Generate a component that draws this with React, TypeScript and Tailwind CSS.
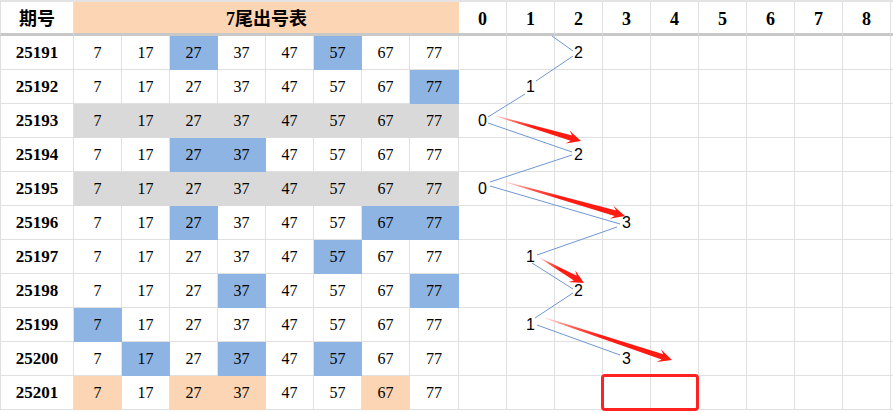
import React from "react";

type Row = { id: string; blue?: number[]; peach?: number[]; gray?: boolean; chart: number | null };

const rows: Row[] = [
  { id: "25191", blue: [27, 57], chart: 2 },
  { id: "25192", blue: [77], chart: 1 },
  { id: "25193", gray: true, chart: 0 },
  { id: "25194", blue: [27, 37], chart: 2 },
  { id: "25195", gray: true, chart: 0 },
  { id: "25196", blue: [27, 67, 77], chart: 3 },
  { id: "25197", blue: [57], chart: 1 },
  { id: "25198", blue: [37, 77], chart: 2 },
  { id: "25199", blue: [7], chart: 1 },
  { id: "25200", blue: [17, 37, 57], chart: 3 },
  { id: "25201", peach: [7, 27, 37, 67], chart: null },
];

const nums = [7, 17, 27, 37, 47, 57, 67, 77];
const digits = [0, 1, 2, 3, 4, 5, 6, 7, 8];

const grid = "grid grid-cols-[74px_repeat(7,48px)_49px_repeat(9,48px)_1fr]";
const serif = "font-['Liberation_Serif','Noto_Sans_CJK_SC',serif]";

function arrowPoly(tx: number, ty: number, px: number, py: number) {
  const dx = px - tx;
  const dy = py - ty;
  const L = Math.hypot(dx, dy);
  const ux = dx / L;
  const uy = dy / L;
  const nx = -uy;
  const ny = ux;
  const pt = (d: number, w: number) => `${(tx + ux * d + nx * w).toFixed(2)},${(ty + uy * d + ny * w).toFixed(2)}`;
  const hl = 14;
  return [pt(0, 0.4), pt(L - hl + 4, 2.8), pt(L - hl, 6.8), pt(L, 0), pt(L - hl, -6.8), pt(L - hl + 4, -2.8), pt(0, -0.4)].join(" ");
}

const arrows = [
  [496, 116, 581, 141],
  [505, 182, 625, 216],
  [540, 258, 584, 283],
  [545, 318, 672, 360],
];

const lines = [
  [552, 36, 573, 51],
  [573, 56, 536, 81],
  [525, 94, 488, 117],
  [488, 123, 572, 152],
  [572, 155, 490, 182],
  [490, 186, 620, 224],
  [617, 227, 537, 255],
  [532, 263, 573, 289],
  [573, 293, 535, 318],
  [537, 325, 620, 355],
];

export default function App() {
  return (
    <div className="relative w-[893px] h-[413px] overflow-hidden bg-white text-black">
      <div className="border-t-2 border-[#e3e3e3]">
        {/* header */}
        <div className={grid}>
          <div className={`h-[34px] border-l border-r border-b-[3px] border-l-[#e0e0e0] border-r-[#e0e0e0] border-b-[#c8c8c8] flex items-center justify-center pt-[3px] text-[18px] font-bold ${serif}`}>
            期号
          </div>
          <div className={`col-span-8 h-[34px] bg-[#fcd5b4] border-b-[3px] border-b-[#c8c8c8] flex items-center justify-center pt-[3px] text-[18px] font-bold ${serif}`}>
            7尾出号表
          </div>
          {digits.map((d) => (
            <div
              key={d}
              className={`h-[34px] border-r border-r-[#e0e0e0] border-b-[3px] border-b-[#c8c8c8] flex items-center justify-center pt-[4px] text-[18px] font-bold ${serif}`}
            >
              {d}
            </div>
          ))}
          <div className="h-[34px] border-b-[3px] border-b-[#c8c8c8]" />
        </div>
        {/* rows */}
        {rows.map((r) => (
          <div key={r.id} className={grid}>
            <div className={`h-[34px] border-l border-r border-b border-[#e0e0e0] flex items-center justify-center text-[17px] font-bold ${serif}`}>
              {r.id}
            </div>
            {nums.map((n) => {
              let cls = "bg-white border-[#e0e0e0]";
              if (r.gray) cls = "bg-[#d9d9d9] border-[#d9d9d9]";
              else if (r.blue?.includes(n)) cls = "bg-[#8db4e2] border-[#8db4e2]";
              else if (r.peach?.includes(n)) cls = "bg-[#fcd5b4] border-[#fcd5b4]";
              return (
                <div key={n} className={`h-[34px] border-r border-b ${cls} flex items-center justify-center text-[16px] ${serif}`}>
                  {n}
                </div>
              );
            })}
            {digits.map((d) => (
              <div
                key={d}
                className="h-[34px] border-r border-b border-[#e0e0e0] flex items-center justify-center text-[16px] font-['Liberation_Sans',sans-serif]"
              >
                {r.chart === d ? d : ""}
              </div>
            ))}
            <div className="h-[34px] border-b border-[#e0e0e0]" />
          </div>
        ))}
      </div>

      <svg className="absolute left-0 top-0 pointer-events-none" width={893} height={413} viewBox="0 0 893 413">
        <defs>
          {arrows.map(([tx, ty, px, py], i) => (
            <linearGradient
              key={i}
              id={`ag${i}`}
              gradientUnits="userSpaceOnUse"
              x1={tx}
              y1={ty}
              x2={tx + (px - tx) * 0.45}
              y2={ty + (py - ty) * 0.45}
            >
              <stop offset="0" stopColor="#ffe4e4" />
              <stop offset="0.5" stopColor="#ff5a50" />
              <stop offset="1" stopColor="#ff1a12" />
            </linearGradient>
          ))}
        </defs>
        {lines.map(([x1, y1, x2, y2], i) => (
          <line key={i} x1={x1} y1={y1} x2={x2} y2={y2} stroke="#6f97d2" strokeWidth={1} />
        ))}
        {arrows.map(([tx, ty, px, py], i) => (
          <polygon key={i} points={arrowPoly(tx, ty, px, py)} fill={`url(#ag${i})`} />
        ))}
      </svg>

      <div className="absolute left-[601px] top-[374px] w-[98px] h-[37px] border-[3px] border-[#ff2222] rounded-[4px]" />
    </div>
  );
}
